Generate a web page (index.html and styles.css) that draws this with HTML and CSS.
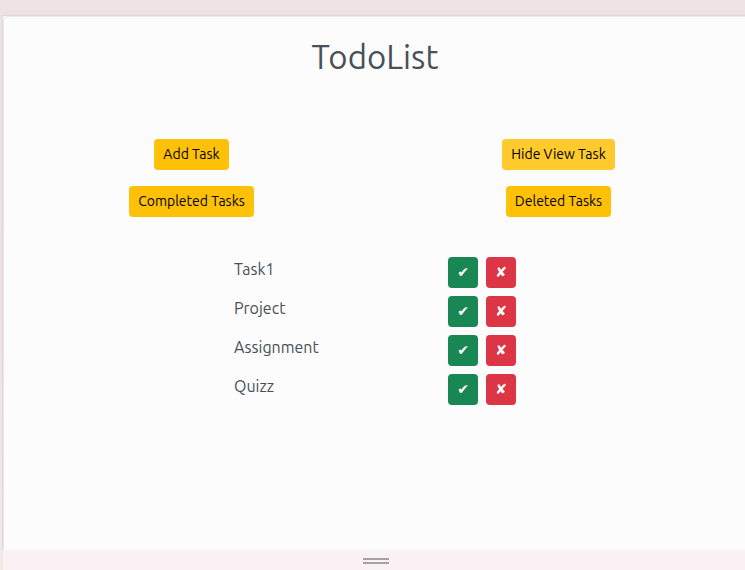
FILE: index.html
```html
<!DOCTYPE html>
<html lang="en">
<head>
<meta charset="utf-8">
<title>TodoList</title>
<link rel="stylesheet" href="styles.css">
</head>
<body>
<div class="frame">
<main class="panel">
  <h1>TodoList</h1>
  <div class="actions">
    <button class="btn add">Add Task</button>
    <button class="btn hide">Hide View Task</button>
    <button class="btn completed">Completed Tasks</button>
    <button class="btn deleted">Deleted Tasks</button>
  </div>
  <ul class="tasks">
    <li><span class="name">Task1</span><button class="mark done">✔</button><button class="mark remove">✘</button></li>
    <li><span class="name">Project</span><button class="mark done">✔</button><button class="mark remove">✘</button></li>
    <li><span class="name">Assignment</span><button class="mark done">✔</button><button class="mark remove">✘</button></li>
    <li><span class="name">Quizz</span><button class="mark done">✔</button><button class="mark remove">✘</button></li>
  </ul>
</main>
</div>
<footer class="resize"><div class="grip"></div></footer>
</body>
</html>
```
FILE: styles.css
```css
* { box-sizing: border-box; }
body {
  margin: 0;
  height: 570px;
  padding: 15px 0 0 2px;
  overflow: hidden;
  background: linear-gradient(#f2e5e6 0, #ece1e3 15px, #eee2e3 300px, #f4e9e9 570px);
  font-family: Ubuntu, "Noto Sans", sans-serif;
  color: #495057;
}
.frame {
  height: 535px;
  border-top: 1px solid #dfd7d9;
  border-left: 1px solid #dfd7d9;
  background: #fff;
}
.panel {
  height: 534px;
  border-top: 1px solid #e6e9ec;
  border-left: 1px solid #e6e9ec;
  border-top-left-radius: 5px;
  background: #fcfcfc;
  padding: 20px 3px 0 4px;
}
h1 {
  margin: 0;
  height: 102px;
  font-size: 33px;
  line-height: 40px;
  font-weight: 400;
  text-align: center;
}
.actions {
  display: grid;
  grid-template-columns: 367px 367px;
  row-gap: 16px;
  justify-items: center;
}
button { border: 0; padding: 0; height: 31px; border-radius: 4px; font-family: inherit; }
.btn { background: #ffc107; color: #000; font-size: 14px; line-height: 31px; white-space: nowrap; }
.add { width: 75px; }
.hide { width: 113px; background: #ffca2c; }
.completed { width: 125px; }
.deleted { width: 105px; }
.tasks { list-style: none; margin: 40px 0 0 226px; padding: 0; display: grid; row-gap: 8px; }
.tasks li { display: flex; height: 31px; }
.name { width: 214px; font-size: 16px; line-height: 24px; }
.mark { width: 30px; color: #fff; font-family: "DejaVu Sans", sans-serif; font-size: 14px; line-height: 31px; }
.done { background: #198754; margin-right: 8px; }
.remove { background: #dc3545; }
.resize { height: 20px; margin-left: 1px; background: #faf1f4; padding: 8px 0 0 360px; }
.grip { width: 26px; height: 6px; border: solid #a5a3a5; border-width: 2px 0; }
```
